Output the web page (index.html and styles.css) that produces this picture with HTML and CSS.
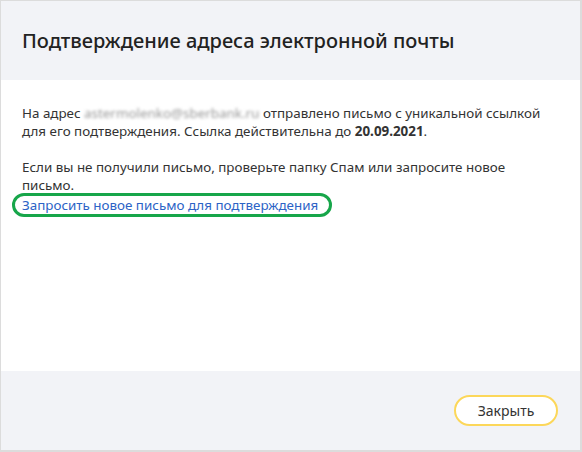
FILE: index.html
```html
<!DOCTYPE html>
<html lang="ru">
<head>
    <meta charset="UTF-8">
    <title>Подтверждение адреса электронной почты</title>
    <link rel="stylesheet" href="styles.css">
</head>
<body>
    <div class="modal">
        <div class="modal-header">
            <h1>Подтверждение адреса электронной почты</h1>
        </div>
        <div class="modal-body">
            <p>На адрес <span class="email">astermolenko@sberbank.ru</span> отправлено письмо с уникальной ссылкой для его подтверждения. Ссылка действительна до <b>20.09.2021</b>.</p>
            <p class="gap">Если вы не получили письмо, проверьте папку Спам или запросите новое письмо.</p>
            <a class="resend" href="#">Запросить новое письмо для подтверждения</a>
        </div>
        <div class="modal-footer">
            <button class="btn-close">Закрыть</button>
        </div>
    </div>
</body>
</html>
```

FILE: styles.css
```css
body {
    margin: 0;
    font-family: 'Noto Sans', 'Open Sans', sans-serif;
    color: #333;
    background: #fff;
}
.modal {
    width: 582px;
    height: 452px;
    box-sizing: border-box;
    border: 1px solid #dcdcdc;
    border-right-width: 2px;
    border-bottom-width: 2px;
    display: flex;
    flex-direction: column;
}
.modal-header {
    background: #f2f3f7;
    height: 79px;
    padding: 0 21px;
    display: flex;
    align-items: center;
}
.modal-header h1 {
    margin: 0;
    font-size: 20px;
    font-weight: 500;
    color: #222;
}
.modal-body {
    flex: 1;
    padding: 24px 21px 0;
    font-size: 13.4px;
    line-height: 18px;
}
.modal-body p {
    margin: 0;
}
.modal-body .gap {
    margin-top: 18px;
}
.email {
    color: #999;
    filter: blur(1.4px);
}
.resend {
    display: block;
    width: max-content;
    margin-left: -10px;
    margin-top: -1px;
    padding: 0 11px 0 7px;
    border: 3px solid #17a64a;
    border-radius: 13px;
    line-height: 18px;
    color: #2c63c6;
    text-decoration: none;
}
.modal-footer {
    background: #f2f3f7;
    height: 79px;
    padding: 0 22px;
    display: flex;
    align-items: center;
    justify-content: flex-end;
}
.btn-close {
    width: 104px;
    height: 31px;
    border: 2px solid #fcd75a;
    border-radius: 16px;
    background: #fff;
    font-family: inherit;
    font-size: 14px;
    color: #333;
}
```
